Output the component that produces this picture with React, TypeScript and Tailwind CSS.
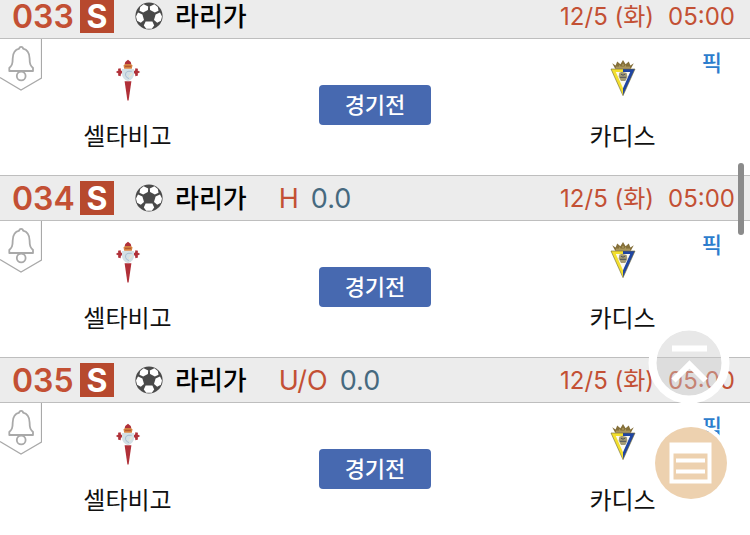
type TMatch = {
   no: string;
   league: string;
   type?: string;
   value?: string;
   date: string;
   time: string;
   home: string;
   away: string;
};

const base = { league: '라리가', date: '12/5 (화)', time: '05:00', home: '셀타비고', away: '카디스' };

const matches: TMatch[] = [
   { ...base, no: '033' },
   { ...base, no: '034', type: 'H', value: '0.0' },
   { ...base, no: '035', type: 'U/O', value: '0.0' },
];

const BallIcon = () => (
   <svg viewBox="0 0 28 28" className="size-7 shrink-0" aria-hidden="true">
      <circle cx="14" cy="14" r="13.6" fill="#4a4a4a" />
      <g fill="#fff">
         <path d="M8.6 2.2 13.2 4.4 12.9 8 8.2 10.6 4.5 8.8 5.2 4.9Z" />
         <path d="M19.4 2.2 14.8 4.4 15.1 8 19.8 10.6 23.5 8.8 22.8 4.9Z" />
         <path d="M3 10.6 7.4 12.6 9 18 5.8 20.7 2.1 18.8 1 14.5Z" />
         <path d="M25 10.6 20.6 12.6 19 18 22.2 20.7 25.9 18.8 27 14.5Z" />
         <path d="M10.6 19.4H17.4L19.2 23.6 16.8 26.7H11.2L8.8 23.6Z" />
      </g>
      <path d="M14 9.3 18.3 12.5 16.7 17.6H11.3L9.7 12.5Z" fill="#4a4a4a" />
   </svg>
);

const AlarmTag = () => (
   <svg viewBox="0 0 42 52" className="block h-[52px] w-[42px]" fill="none" stroke="#a9a9a9" aria-hidden="true">
      <path d="M41.5 0V39L21 51 0 38.5" strokeWidth="1.2" />
      <path
         d="M19.3 9.6C19.3 7.4 23 7.4 23 9.6C27.8 10.8 29.6 14.6 29.6 19.5C29.6 25.4 30.5 26.5 33 29V32H9.3V29C11.8 26.5 12.7 25.4 12.7 19.5C12.7 14.6 14.5 10.8 19.3 9.6Z"
         strokeWidth="1.8"
         strokeLinejoin="round"
      />
      <circle cx="21.2" cy="37" r="4.4" strokeWidth="1.8" />
   </svg>
);

const CeltaCrest = () => (
   <svg viewBox="0 0 26 42" className="h-[42px] w-[26px]" aria-hidden="true">
      <g fill="#b03038">
         <path d="M9.6 5.4Q9.8 2.5 13 .8Q16.2 2.5 16.4 5.4Z" />
         <path d="M.8 13 3.3 11.6 3 9.8 5.6 9.2 6 11.8H8V14.6H6L5.6 17.2 3 16.4 3.3 14.4Z" />
         <path d="M25.2 13 22.7 11.6 23 9.8 20.4 9.2 20 11.8H18V14.6H20L20.4 17.2 23 16.4 22.7 14.4Z" />
         <path d="M9.6 22.2H16.4L13.6 41.4H12.4Z" />
      </g>
      <path d="M8.5 6.3 10.5 5H15.5L17.5 6.3 16.8 9.8H9.2Z" fill="#d4813f" />
      <path d="M10 7.3H16" stroke="#ad5030" strokeWidth="1" />
      <path d="M7 10H19V15Q19 20 13 22.3Q7 20 7 15Z" fill="#d3e0e5" />
      <path d="M16.8 12.3H13Q9.9 13 10.5 16.2Q11.2 19 14 19.6" fill="none" stroke="#a9bfd2" strokeWidth="1" />
      <path d="M17 14.4 14.2 17.6" stroke="#eee6cf" strokeWidth="1.4" />
   </svg>
);

const CadizCrest = () => (
   <svg viewBox="0 0 26 38" className="h-[38px] w-[26px]" aria-hidden="true">
      <path d="M1.5 10.5H24.5L13 36.5Z" fill="#fbfaf2" />
      <path d="M13 36.5 1 10H13V13H5.8L13 29.2Z" fill="#f3df2e" />
      <path d="M13 36.5 25 10H13V13H20.2L13 29.2Z" fill="#1f45a3" />
      <path d="M1 10H25L13 36.7Z" fill="none" stroke="#6e6730" strokeWidth=".6" />
      <path d="M2.2 4.3 5.6 6.5 7.2 2.6 10.4 5.3 13 1 15.6 5.3 18.8 2.6 20.4 6.5 23.8 4.3 20.8 9.8H5.2Z" fill="#85703a" />
      <path d="M6 8.2H20M9 6.7 10.2 7.4M16 6.7 14.8 7.4M13 5V7" stroke="#c9b877" strokeWidth=".8" />
      <path d="M9.3 13.7 12 12.8 16.7 14 17.4 18 15.3 22H11L8.7 17.8Z" fill="#a39a74" />
      <path d="M10 18.3H16M11 15.2 13 16.2 15.3 15" stroke="#4c525a" strokeWidth="1" fill="none" />
   </svg>
);

const MatchRow = ({ no, league, type, value, date, time, home, away }: TMatch) => (
   <li>
      <header className="flex h-[46px] items-center justify-between border-y border-[#bebebe] bg-[#ececec] pr-[15px] pl-3">
         <div className="flex items-center">
            <span className="w-[68px] pt-0.5 text-[32px] leading-8 font-semibold text-[#c35034]">{no}</span>
            <span className="flex size-[34px] items-center justify-center bg-[#b7492e] pt-0.5 text-[32px] leading-8 font-bold text-white">S</span>
            <span className="mr-3 ml-[21px]">
               <BallIcon />
            </span>
            <h2 className="pt-0.5 text-[26px] leading-8 font-medium text-black">{league}</h2>
            {type && (
               <p className="ml-8 flex gap-3 pt-0.5 text-[27px] leading-8 text-[#46697f]">
                  <span className="text-[#c35034]">{type}</span>
                  {value}
               </p>
            )}
         </div>
         <p className="flex gap-3.5 pt-0.5 text-2xl leading-8 text-[#c35034]">
            <span>{date}</span>
            <time>{time}</time>
         </p>
      </header>

      <div className="relative grid h-[136px] grid-cols-[17fr_16fr_17fr] text-2xl text-[#111]">
         <button type="button" aria-label="알림" className="absolute top-0 left-0">
            <AlarmTag />
         </button>
         <div className="flex flex-col items-center pt-5">
            <div className="h-[62px]">
               <CeltaCrest />
            </div>
            <span className="leading-8">{home}</span>
         </div>
         <div className="flex items-start justify-center pt-[46px]">
            <button type="button" className="h-10 w-28 rounded bg-[#4769b0] text-[22px] leading-8 font-medium text-white">
               경기전
            </button>
         </div>
         <div className="flex flex-col items-center pt-5">
            <div className="h-[62px]">
               <CadizCrest />
            </div>
            <span className="leading-8">{away}</span>
         </div>
         <a href="#pick" className="absolute top-2 right-7 text-[22px] leading-8 font-medium text-[#2d7dcd]">
            픽
         </a>
      </div>
   </li>
);

export default function App() {
   return (
      <main className="relative h-screen overflow-hidden bg-white font-[Inter,'Noto_Sans_CJK_KR',sans-serif]">
         <ul className="-mt-[7px]">
            {matches.map((item) => (
               <MatchRow key={item.no} {...item} />
            ))}
         </ul>

         <div className="absolute top-[163px] right-[6px] h-[72px] w-[6px] rounded-full bg-[#8b8b8b]" />

         <button type="button" aria-label="맨 위로" className="absolute right-5 bottom-[131px] size-[82px]">
            <svg viewBox="0 0 82 82" className="size-full" fill="none" stroke="#fff" aria-hidden="true">
               <circle cx="41" cy="41" r="33" fill="#c8c8c8" fillOpacity=".42" stroke="none" />
               <circle cx="41" cy="41" r="36.5" strokeWidth="8" />
               <path d="M24 26.5H59" strokeWidth="6" />
               <path d="M25.5 58.5 41.5 42.5 57.5 58.5" strokeWidth="6" />
            </svg>
         </button>
         <button type="button" aria-label="목록" className="absolute right-[23px] bottom-9 size-[72px] rounded-full ring-4 ring-white">
            <svg viewBox="0 0 72 72" className="size-full" fill="none" stroke="#fff" aria-hidden="true">
               <circle cx="36" cy="36" r="36" fill="#edd1af" stroke="none" />
               <path d="M14.5 15.5H56.5V56.5H14.5ZM18.5 26.5V52.5H52.5V26.5Z" fill="#fff" fillRule="evenodd" stroke="none" />
               <path d="M21 33.5H50M21 44.5H50" strokeWidth="4" />
            </svg>
         </button>
      </main>
   );
}
